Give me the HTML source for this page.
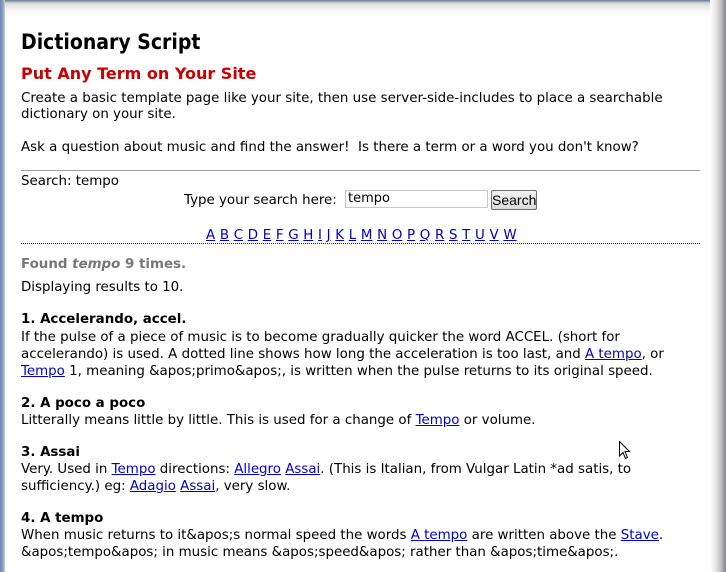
<!DOCTYPE html>
<html><head><meta charset="utf-8"><style>
html,body{margin:0;padding:0;width:726px;height:572px;overflow:hidden;background:#fff;}
body{font-family:"DejaVu Sans","Liberation Sans",sans-serif;font-size:13.4px;color:#000;position:relative;}
.frame-top{position:absolute;left:0;top:0;width:726px;height:16px;background:linear-gradient(#6d7787 0,#a9b3c3 2px,#d8d8d8 3px,#f4f4f4 10px,#fff 16px);}
.frame-left{position:absolute;left:0;top:0;width:5px;height:572px;background:linear-gradient(90deg,#6b85ad,#8da3c4 3px,#c7d1df);}
.frame-right{position:absolute;right:0;top:0;width:16px;height:572px;background:linear-gradient(90deg,#fff,#e6e6e6 6px,#c0c0c0 11px,#9a9a9a 14px,#7c8aa0);}
#c{position:absolute;left:0;top:1px;width:726px;height:571px;}
.l{position:absolute;left:21px;white-space:nowrap;line-height:16px;}
a{color:#00c;text-decoration:underline;}
</style></head><body>
<div class="frame-top"></div><div class="frame-left"></div><div class="frame-right"></div>
<div id="c">
<div class="l" style="top:29px;font-size:21px;font-weight:bold;line-height:24px;font-family:'DejaVu Sans Condensed','DejaVu Sans',sans-serif;">Dictionary Script</div>
<div class="l" style="top:63px;font-size:16px;font-weight:bold;color:#c00;line-height:20px;">Put Any Term on Your Site</div>
<div class="l" style="top:90px;">Create a basic template page like your site, then use server-side-includes to place a searchable</div>
<div class="l" style="top:106px;">dictionary on your site.</div>
<div class="l" style="top:139px;">Ask a question about music and find the answer!&nbsp; Is there a term or a word you don't know?</div>
<div style="position:absolute;left:21px;width:679px;top:169px;height:1px;background:#a0a0a0;"></div>
<div class="l" style="top:173px;">Search: tempo</div>
<div class="l" style="left:184px;top:192px;">Type your search here:</div>
<div style="position:absolute;left:345px;top:189px;width:143px;height:18px;border:1px solid #c8c8c8;box-sizing:border-box;font-size:13px;line-height:16px;padding-left:2px;">tempo</div>
<div style="position:absolute;left:491px;top:189px;width:46px;height:20px;border:1px solid #707070;border-radius:2px;box-sizing:border-box;background:linear-gradient(#f2f2f2,#dcdcdc);font-family:'Liberation Sans',sans-serif;font-size:14px;line-height:18px;text-align:center;">Search</div>
<div class="l" style="left:206px;top:227px;word-spacing:0.4px;"><a>A</a> <a>B</a> <a>C</a> <a>D</a> <a>E</a> <a>F</a> <a>G</a> <a>H</a> <a>I</a> <a>J</a> <a>K</a> <a>L</a> <a>M</a> <a>N</a> <a>O</a> <a>P</a> <a>Q</a> <a>R</a> <a>S</a> <a>T</a> <a>U</a> <a>V</a> <a>W</a></div>
<div style="position:absolute;left:21px;width:679px;top:242px;height:0;border-top:1px dotted #a00;"></div>
<div class="l" style="top:256px;color:#777;font-weight:bold;">Found <i>tempo</i> 9 times.</div>
<div class="l" style="top:279px;">Displaying results to 10.</div>
<div class="l" style="top:311px;font-weight:bold;">1. Accelerando, accel.</div>
<div class="l" style="top:329px;">If the pulse of a piece of music is to become gradually quicker the word ACCEL. (short for</div>
<div class="l" style="top:346px;">accelerando) is used. A dotted line shows how long the acceleration is too last, and <a>A tempo</a>, or</div>
<div class="l" style="top:363px;"><a>Tempo</a> 1, meaning &amp;apos;primo&amp;apos;, is written when the pulse returns to its original speed.</div>
<div class="l" style="top:395px;font-weight:bold;">2. A poco a poco</div>
<div class="l" style="top:412px;">Litterally means little by little. This is used for a change of <a>Tempo</a> or volume.</div>
<div class="l" style="top:444px;font-weight:bold;">3. Assai</div>
<div class="l" style="top:461px;">Very. Used in <a>Tempo</a> directions: <a>Allegro</a> <a>Assai</a>. (This is Italian, from Vulgar Latin *ad satis, to</div>
<div class="l" style="top:478px;">sufficiency.) eg: <a>Adagio</a> <a>Assai</a>, very slow.</div>
<div class="l" style="top:510px;font-weight:bold;">4. A tempo</div>
<div class="l" style="top:527px;">When music returns to it&amp;apos;s normal speed the words <a>A tempo</a> are written above the <a>Stave</a>.</div>
<div class="l" style="top:544px;">&amp;apos;tempo&amp;apos; in music means &amp;apos;speed&amp;apos; rather than &amp;apos;time&amp;apos;.</div>
</div>
<svg style="position:absolute;left:619px;top:441px" width="12" height="19" viewBox="0 0 12 19"><path d="M0.5 0.5 L0.5 15 L4 11.5 L6.5 17.5 L8.5 16.5 L6 10.5 L10.5 10.5 Z" fill="#fff" stroke="#000" stroke-width="1"/></svg>
</body></html>
